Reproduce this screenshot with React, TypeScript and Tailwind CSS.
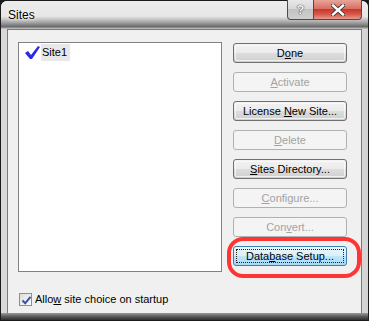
import React from "react";

const font = { fontFamily: '"Liberation Sans", Arial, sans-serif' };

function Btn({
  children,
  disabled,
  focused,
}: {
  children: React.ReactNode;
  disabled?: boolean;
  focused?: boolean;
}) {
  if (disabled) {
    return (
      <div className="h-[20px] w-[114px] rounded-[3px] border border-[#adb2b5] bg-[#f4f4f4] flex items-center justify-center text-[11px] text-[#a3a3a3]">
        <span>{children}</span>
      </div>
    );
  }
  if (focused) {
    return (
      <div className="h-[20px] w-[114px] rounded-[3px] border border-[#3c7fb1] bg-[linear-gradient(#eaf6fd_0%,#d9f0fc_50%,#bee6fd_50%,#a7d9f5_100%)] p-[2px]">
        <div className="h-full w-full border border-dotted border-[#222] flex items-center justify-center text-[11px] text-black">
          <span>{children}</span>
        </div>
      </div>
    );
  }
  return (
    <div className="h-[20px] w-[114px] rounded-[3px] border border-[#707070] bg-[linear-gradient(#f2f2f2_0%,#ebebeb_50%,#dddddd_50%,#cfcfcf_100%)] p-[1px]">
      <div className="h-full w-full rounded-[2px] border border-[#fcfcfc]/70 flex items-center justify-center text-[11px] text-black">
        <span>{children}</span>
      </div>
    </div>
  );
}

export default function App() {
  return (
    <div
      className="relative w-[369px] h-[321px] bg-[#1b1b1b] overflow-hidden"
      style={font}
    >
      <div className="absolute inset-[1px] rounded-t-[6px] flex flex-col bg-[linear-gradient(90deg,#d8d8d8,#e6e6e6_20%,#d0d0d0_50%,#dedede_80%,#d4d4d4)]">
        {/* title bar */}
        <div className="relative h-[28px] shrink-0 rounded-t-[6px] bg-[linear-gradient(#ececec_0%,#e6e6e6_55%,#a8a8a8_75%,#6a6a6a_92%,#cfcfcf_100%)]">
          <div
            className="absolute left-[7px] top-[5px] text-[12px] text-black"
            style={{ textShadow: "0 0 6px #fff, 0 0 3px #fff" }}
          >
            Sites
          </div>
          {/* caption buttons */}
          <div className="absolute right-[6px] top-[-1px] flex">
            <div
              className="w-[27px] h-[20px] border border-[#4b4b4b] border-t-0 rounded-bl-[4px] bg-[linear-gradient(#e8e8e8,#d6d6d6_50%,#c2c2c2_50%,#d0d0d0)] flex items-center justify-center text-[13px] font-bold text-[#f6f6f6]"
              style={{ textShadow: "0 0 1px #333, 0 0 1px #333" }}
            >
              ?
            </div>
            <div className="w-[48px] h-[20px] border border-[#4b4b4b] border-t-0 border-l-0 rounded-br-[4px] bg-[linear-gradient(#e8a59a,#d97062_45%,#c8382a_50%,#d6584a_75%,#e89b8c)] flex items-center justify-center">
              <svg width="14" height="12" viewBox="0 0 14 12">
                <path
                  d="M2 1.5 L12 10.5 M12 1.5 L2 10.5"
                  stroke="#3a3a3a"
                  strokeWidth="4.2"
                  strokeLinecap="square"
                />
                <path
                  d="M2 1.5 L12 10.5 M12 1.5 L2 10.5"
                  stroke="#ffffff"
                  strokeWidth="2.4"
                  strokeLinecap="square"
                />
              </svg>
            </div>
          </div>
        </div>
        {/* client area */}
        <div className="relative mx-[6px] flex-1 border border-[#7a7a7a] border-b-0 bg-[#f0f0f0] pl-[10px] pt-[12px]">
          <div className="flex">
            <div className="w-[204px] h-[230px] border border-[#828282] bg-white pt-[1px] pl-[5px]">
              <div className="flex items-center h-[17px]">
                <svg width="17" height="15" viewBox="0 0 17 15">
                  <path
                    d="M1 8 L4 6 L7 10 L14 1 L16 2 L8 14 L6 14 Z"
                    fill="#2a2ae8"
                  />
                </svg>
                <div className="h-[17px] bg-[#e8e8e8] pl-[1px] pr-[3px] flex items-center text-[11px] text-black">
                  Site1
                </div>
              </div>
            </div>
            <div className="ml-[11px] pt-[1px] flex flex-col gap-[9px]">
              <Btn>
                D<u>o</u>ne
              </Btn>
              <Btn disabled>
                <u>A</u>ctivate
              </Btn>
              <Btn>
                License <u>N</u>ew Site...
              </Btn>
              <Btn disabled>
                <u>D</u>elete
              </Btn>
              <Btn>
                <u>S</u>ites Directory...
              </Btn>
              <Btn disabled>
                <u>C</u>onfigure...
              </Btn>
              <Btn disabled>
                Con<u>v</u>ert...
              </Btn>
              <Btn focused>
                Data<u>b</u>ase Setup...
              </Btn>
            </div>
          </div>
          <div className="mt-[19px] ml-[1px] flex items-center">
            <div className="w-[13px] h-[13px] border border-[#8e8f8f] bg-[linear-gradient(135deg,#dcdcdc,#fdfdfd)] p-[1px]">
              <svg width="11" height="11" viewBox="0 0 11 11" className="block">
                <path
                  d="M1.5 5.5 L4.2 8.3 L9.5 1.8"
                  fill="none"
                  stroke="#3452a8"
                  strokeWidth="2"
                />
              </svg>
            </div>
            <div className="ml-[3px] text-[11px] text-black">
              Allo<u>w</u> site choice on startup
            </div>
          </div>
          {/* red annotation */}
          <div className="absolute left-[219px] top-[207px] w-[134px] h-[41px] rounded-[16px] border-[4px] border-[#ff3535]" />
        </div>
        {/* bottom frame */}
        <div className="h-[7px] shrink-0 bg-[linear-gradient(#9a9a9a,#5a5a5a_50%,#2e2e2e)]" />
      </div>
    </div>
  );
}
